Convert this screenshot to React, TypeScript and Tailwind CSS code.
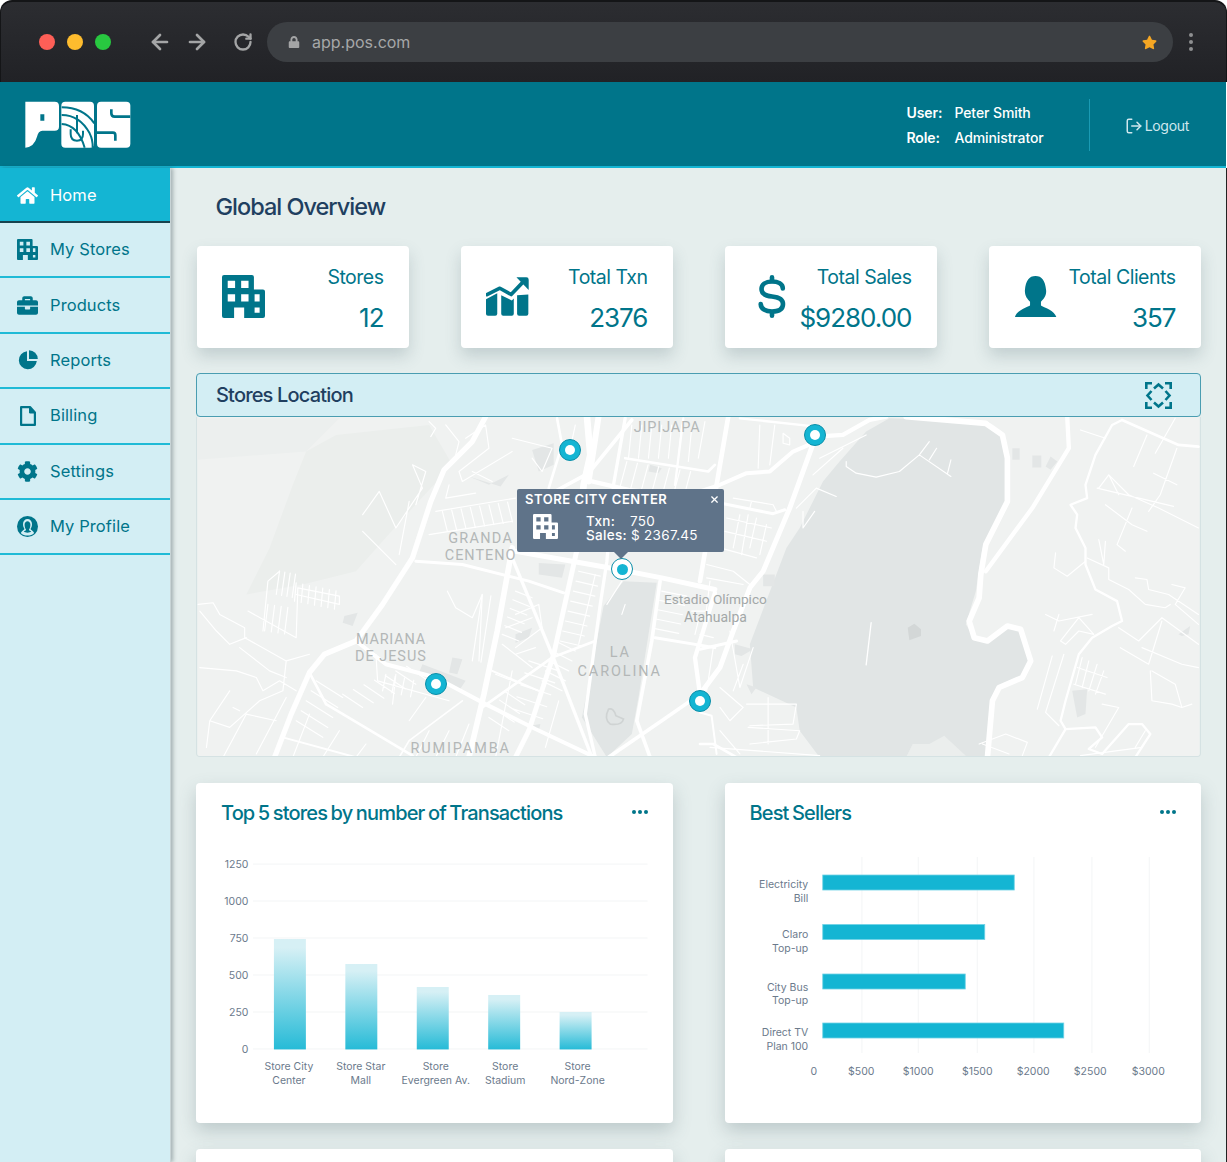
import React from "react";
import { ArrowLeft, ArrowRight, RotateCw, LogOut } from "lucide-react";
import { FaHome, FaBriefcase, FaCog, FaLock, FaStar } from "react-icons/fa";

const TEAL = "#00758a";

function Building({ className }: { className?: string }) {
  return (
    <svg viewBox="0 0 128 128" className={className} fill="currentColor">
      <path
        fillRule="evenodd"
        d="M6 0H89Q95 0 95 6V43H122Q128 43 128 49V122Q128 128 122 128H66V97H36V128H6Q0 128 0 122V6Q0 0 6 0ZM17 17V39H39V17ZM57 17V39H79V17ZM17 57V79H39V57ZM57 57V79H79V57ZM97 57V79H112V57ZM97 97V112H112V97Z"
      />
    </svg>
  );
}

function Growth({ className }: { className?: string }) {
  return (
    <svg viewBox="0 0 130 120" className={className} fill="currentColor">
      <path d="M0 68 L34 50 V112 Q34 118 28 118 H6 Q0 118 0 112Z" />
      <path d="M46 56 L78 72 L84 66 V112 Q84 118 78 118 H52 Q46 118 46 112Z" />
      <path d="M94 56 L128 54 V112 Q128 118 122 118 H100 Q94 118 94 112Z" />
      <path d="M3 54 L42 35 L76 54 L116 12" fill="none" stroke="currentColor" strokeWidth="11" strokeLinecap="round" strokeLinejoin="round" />
      <path d="M92 2 H122 Q129 2 129 9 V40 Z" />
    </svg>
  );
}

function Dollar() {
  return (
    <svg viewBox="0 0 28 43" className="w-[28px] h-[43px]" fill="none" stroke={TEAL} strokeWidth="4.6" strokeLinecap="round">
      <path d="M14 2.3V6M14 37V40.7" />
      <path d="M24.8 13.5C24.8 9 20 6.5 14 6.5C7.5 6.5 3.5 9.5 3.5 14C3.5 19 7.5 20.8 14 21.5C21 22.2 25 24.5 25 29C25 33.8 21 36.5 14 36.5C7.5 36.5 3 34 2.7 29" />
    </svg>
  );
}

function Bust({ className }: { className?: string }) {
  return (
    <svg viewBox="908 104 134 132" className={className} fill="currentColor">
      <path d="M911 234C915 215 945 205 958 198L958 186C950 178 941 168 942 150C945 120 955 106 975 106C995 106 1005 120 1008 150C1010 168 1000 178 992 186L992 198C1005 205 1035 215 1040 234Z" />
    </svg>
  );
}

function Frame() {
  return (
    <svg viewBox="0 0 27 27" className="w-[27px] h-[27px]" fill="none" stroke={TEAL} strokeWidth="2.6">
      <path d="M1.3 7V1.3H7M20 1.3H25.7V7M25.7 20V25.7H20M7 25.7H1.3V20" />
      <path d="M9 6.5L13.5 2.5L18 6.5M20.5 9L24.5 13.5L20.5 18M18 20.5L13.5 24.5L9 20.5M6.5 18L2.5 13.5L6.5 9" />
    </svg>
  );
}

function Logo() {
  return (
    <svg viewBox="70 300 330 150" className="w-[110px] h-[50px]">
      <path
        fill="#fff"
        fillRule="evenodd"
        d="M77 305H165Q178 305 178 318V380Q178 392 165 392H128Q116 392 112 410Q104 440 77 443ZM122 343V362H134V343Z"
      />
      <rect x="185" y="305" width="98" height="138" rx="12" fill="#fff" />
      <g fill="none" stroke={TEAL} strokeWidth="6">
        <path d="M186 322Q250 322 284 370" />
        <path d="M186 345Q240 345 270 400Q280 420 279 443" />
        <path d="M186 372Q235 375 255 443" />
      </g>
      <path d="M232 345V400M213 388V402Q213 422 232 422Q250 422 250 402V392" fill="none" stroke={TEAL} strokeWidth="6" />
      <rect x="292" y="305" width="100" height="138" rx="12" fill="#fff" />
      <path d="M392 350H345Q335 350 335 340V328" fill="none" stroke={TEAL} strokeWidth="8" />
      <path d="M292 398H340Q347 398 347 406V422" fill="none" stroke={TEAL} strokeWidth="8" />
    </svg>
  );
}

function PieIcon() {
  return (
    <svg viewBox="0 0 20 20" className="w-[20px] h-[20px]" fill={TEAL}>
      <path d="M9 1.2A9 9 0 1 0 18.8 11H9Z" />
      <path d="M11 0.2A9 9 0 0 1 19.8 9H11Z" />
    </svg>
  );
}

function FileIcon() {
  return (
    <svg viewBox="0 0 16 20" className="w-[16px] h-[20px]" fill="none" stroke={TEAL} strokeWidth="2.2" strokeLinejoin="round">
      <path d="M1.1 1.1H10L14.9 6.5V18.9H1.1Z" />
      <path d="M9.5 1.1V7H14.9" fill={TEAL} strokeWidth="1" />
    </svg>
  );
}

function ProfileIcon() {
  return (
    <svg viewBox="0 0 21 21" className="w-[21px] h-[21px]">
      <circle cx="10.5" cy="10.5" r="10.5" fill={TEAL} />
      <path d="M3.8 17C5 14.5 7 14 7.5 13C6.5 11.5 6 10 6 8C6 5 8 3 10.5 3C13 3 15 5 15 8C15 10 14.5 11.5 13.5 13C14 14 16 14.5 17.2 17C15.5 19 13 19.5 10.5 19.5C8 19.5 5.5 19 3.8 17Z" fill="#d3eef4" />
      <path d="M6.8 15.5C8 15 9 14.5 9 13.5C8 12.5 7.6 10 7.6 8.5C7.6 6.5 9 5.2 10.5 5.2C12 5.2 13.4 6.5 13.4 8.5C13.4 10 13 12.5 12 13.5C12 14.5 13 15 14.2 15.5C13 17 8 17 6.8 15.5Z" fill={TEAL} />
    </svg>
  );
}

const NAV: { label: string; icon: React.ReactNode; active?: boolean }[] = [
  { label: "Home", icon: <FaHome size={21} color="#fff" />, active: true },
  { label: "My Stores", icon: <Building className="w-[21px] h-[21px] text-[#00758a]" /> },
  { label: "Products", icon: <FaBriefcase size={21} color={TEAL} /> },
  { label: "Reports", icon: <PieIcon /> },
  { label: "Billing", icon: <FileIcon /> },
  { label: "Settings", icon: <FaCog size={21} color={TEAL} /> },
  { label: "My Profile", icon: <ProfileIcon /> },
];

function Chrome() {
  return (
    <div className="h-[82px] bg-white shrink-0">
      <div className="h-full rounded-t-[12px] border-t-2 border-x border-[#141517] bg-gradient-to-b from-[#2c2d31] to-[#212226] flex items-center pl-[38px] pr-[31px]">
        <div className="flex gap-[12px]">
          <span className="w-[16px] h-[16px] rounded-full bg-[#fe5f57]" />
          <span className="w-[16px] h-[16px] rounded-full bg-[#febc2e]" />
          <span className="w-[16px] h-[16px] rounded-full bg-[#28c840]" />
        </div>
        <div className="flex items-center ml-[37px] text-[#a4a5a6]">
          <ArrowLeft size={24} strokeWidth={2.7} />
          <ArrowRight size={24} strokeWidth={2.7} className="ml-[13px]" />
          <RotateCw size={20} strokeWidth={2.8} className="ml-[24px]" />
        </div>
        <div className="ml-[14px] h-[40px] w-[906px] rounded-[20px] bg-[#3c3f43] flex items-center pl-[21px] pr-[16px]">
          <FaLock size={12} color="#a4a5a6" />
          <span className="ml-[12px] mb-[1px] text-[16px] text-[#a6a7a8]">app.pos.com</span>
          <FaStar size={15} color="#f5a623" className="ml-auto" />
        </div>
        <div className="ml-[16px] flex flex-col gap-[3px]">
          <span className="w-[4px] h-[4px] rounded-full bg-[#8e8f91]" />
          <span className="w-[4px] h-[4px] rounded-full bg-[#8e8f91]" />
          <span className="w-[4px] h-[4px] rounded-full bg-[#8e8f91]" />
        </div>
      </div>
    </div>
  );
}

function Header() {
  return (
    <header className="h-[86px] shrink-0 bg-[#00758a] border-b-2 border-[#14b5d3] flex items-center pl-[23px] pr-[37px] pt-[2px] mr-px">
      <Logo />
      <div className="ml-auto grid grid-cols-[48px_auto] gap-y-[7px] text-[14px] leading-[18px] text-white tracking-[-0.1px] font-medium">
        <span className="font-semibold">User:</span>
        <span>Peter Smith</span>
        <span className="font-semibold">Role:</span>
        <span>Administrator</span>
      </div>
      <div className="w-px h-[52px] bg-[#1a9bb4] ml-[45px]" />
      <div className="ml-[35px] mt-[1px] flex items-center gap-[2px] text-[14px] text-[#cfe8ee] tracking-[-0.3px]">
        <LogOut size={18} strokeWidth={2} />
        <span>Logout</span>
      </div>
    </header>
  );
}

function Sidebar() {
  return (
    <aside className="w-[171px] shrink-0 bg-[#d3eef4] shadow-[2px_0_4px_rgba(40,60,70,0.35)] relative z-10 border-r border-[#c8d4d6]">
      {NAV.map((n) => (
        <div
          key={n.label}
          className={
            n.active
              ? "h-[55px] flex items-center pl-[16px] pt-[1px] bg-[#14b5d3] text-white border-b-2 border-[#17434f]"
              : "h-[55.4px] flex items-center pl-[16px] text-[#00758a] border-b-2 border-[#1fbad6]"
          }
        >
          <span className="w-[23px] flex justify-center">{n.icon}</span>
          <span className="ml-[11px] text-[16.5px] tracking-[0.1px]">{n.label}</span>
        </div>
      ))}
    </aside>
  );
}

function Stat({ label, value, icon }: { label: string; value: string; icon: React.ReactNode }) {
  return (
    <div className="h-[102px] rounded-[4px] bg-white shadow-[0_8px_16px_rgba(70,95,105,0.22)] flex pl-[25px] pr-[25.5px] pt-[19px] text-[#00758a]">
      <div className="w-[43px] h-[43px] mt-[10px] flex items-center justify-center shrink-0">{icon}</div>
      <div className="ml-auto flex flex-col items-end">
        <span className="text-[19.5px] leading-[24px] tracking-[-0.5px]">{label}</span>
        <span className="mt-[14px] text-[26px] leading-[30px] tracking-[-1px]">{value}</span>
      </div>
    </div>
  );
}

type L = [number, number, number, number, number, number, number];
const ladders: L[] = [
  [740, 290, 755, 350, 28, -4, 8],
  [1295, 140, 1275, 215, 32, 5, 7],
  [1150, 470, 1215, 485, -8, 30, 8],
  [250, 470, 240, 540, 16, 3, 4],
  [300, 505, 295, 560, 20, 4, 7],
  [215, 570, 205, 650, 20, 3, 4],
  [860, 540, 830, 740, 26, 4, 2],
  [570, 780, 560, 830, 28, 6, 4],
  [440, 840, 500, 880, 32, -14, 7],
  [880, 910, 940, 950, 16, -26, 4],
  [1040, 800, 1100, 830, 10, -30, 5],
  [1430, 30, 1420, 130, 30, 5, 3],
  [1140, 30, 1125, 100, 0, 0, 1],
  [960, 530, 1010, 550, -8, 26, 6],
  [1400, 530, 1475, 545, -6, 28, 5],
  [1490, 330, 1530, 340, 0, 0, 1],
  [1090, 770, 1000, 740, -12, 36, 5],
  [360, 800, 440, 850, -15, 30, 5],
  [1310, 30, 1300, 130, 30, 0, 6],
];

function ladderPath(l: L) {
  let d = "";
  for (let i = 0; i < l[6]; i++) {
    d += `M${l[0] + l[4] * i} ${l[1] + l[5] * i}L${l[2] + l[4] * i} ${l[3] + l[5] * i}`;
  }
  return d;
}

const WEST: [string, number][] = [
  ["M870 5L830 80L745 165L705 260L650 430L560 570L480 680L385 720L340 775L285 900L235 1030", 16],
  ["M950 400L905 650L865 840L820 1030", 17],
  ["M1145 405L1075 720L1000 950L960 1030", 15],
  ["M1175 5L1185 120L1165 210L1145 405", 20],
  ["M1210 5L1180 200", 18],
  ["M1290 10L1255 210L1235 440L1215 570L1170 900L1200 1030", 10],
  ["M1310 15L1180 175L1060 240", 11],
  ["M1085 10L1100 90L1060 220", 8],
  ["M660 440L800 450L1000 500L1105 535", 9],
  ["M960 410L1130 440L1270 465L1400 490L1560 525", 15],
  ["M1190 200L1300 225L1560 255", 13],
  ["M950 430L1070 720L1190 1030", 10],
  ["M1395 500L1370 680L1325 920L1365 1030", 11],
  ["M480 680L570 750L720 790L870 870L1020 945L1200 1030", 12],
  ["M390 870L650 1025", 8],
  ["M340 775L390 870", 8],
  ["M860 880L1070 730L1200 680", 8],
  ["M890 770L1030 830", 6],
  ["M1380 670L1560 700", 9],
  ["M1515 840L1400 920L1240 1030", 11],
  ["M1560 535L1500 730L1515 840", 13],
  ["M1290 130L1540 170L1560 150", 8],
  ["M1465 10L1440 210", 7],
  ["M800 860L640 980L610 1030", 5],
  ["M260 970L480 1030", 6],
];

const WEST_THIN =
  "M5 570L50 565L70 600L145 640L145 670L270 740L340 720M10 590L60 650L100 690L150 670M30 1000L40 920L100 830M40 920L100 940L190 860L260 830L270 740M180 790L200 830L250 800L300 830M500 300L550 230L600 340L680 220L650 150L690 170L660 270M500 350L600 450M810 70L870 30L880 100L790 170L800 200L950 110M950 70L1070 100L1040 170L1010 130M760 210L750 250L840 235M755 530L780 580L830 610L860 540L850 740M720 290L960 250M700 360L950 320M610 420L640 260M155 590L300 670L305 520L430 545L430 570L300 540M200 650L215 500L250 470M700 20L720 40L705 65M750 30L790 80L780 120M930 640L1010 610M920 690L1010 760M900 780L1030 830M110 880L130 890M180 1020L270 850M1235 570L1280 500M1290 570L1280 600M830 170L890 200M540 720L545 800L760 860M600 780L590 870M690 850L640 920M1200 480L1150 690M1020 700L960 720M1490 590L1540 590M1500 660L1510 620M1510 130L1530 20M80 1030L150 900L240 920M130 700L220 770L270 790M10 760L120 770L180 790M340 900L290 1030M430 950L380 1030M510 990L480 1030M700 950L660 1030M760 950L720 1030M820 930L780 1030M950 770L900 1030M1050 1000L1090 860M960 600L1030 570L1040 640L960 700";

const EAST: [string, number][] = [
  ["M620 5L860 25L910 60L925 130L925 260L860 390L845 480L840 550L810 620L825 670L865 680L925 635L965 645L995 740L970 790L900 820L880 860L865 1030", 17],
  ["M1105 5L1110 100L1000 280L860 470", 13],
  ["M350 60L270 280L190 470L150 520L100 650L60 760L0 840", 15],
  ["M350 65L430 60L510 15L560 5", 13],
  ["M350 80L280 110L210 170L140 175L60 210L0 230", 12],
  ["M85 5L50 210L0 500", 14],
  ["M60 265L220 297L255 285", 9],
  ["M0 705L110 680", 9],
  ["M120 10L350 35", 7],
  ["M1270 15L1440 90L1500 95", 8],
  ["M1270 15L1240 30L1190 120L1160 210L1165 250L1115 270L1135 300L1130 340L1160 400L1160 450L1190 525L1255 560L1270 620L1240 635L1180 670L1140 720L1100 860L1085 920L1100 945L1050 1030", 7],
  ["M1100 945L1190 940L1210 970L1170 1005L1210 1020L1290 930L1330 930L1355 960L1310 1030", 7],
  ["M0 895L35 905L50 1020", 6],
  ["M0 990L40 990L110 1030", 8],
];

const EAST_THIN =
  "M660 120L755 185M690 80L660 120M712 100L690 135M755 135L745 175M440 140L440 155L470 175L530 187L600 170L660 120M1145 45L1220 70M1345 60L1305 155M1430 10L1370 115M1435 100L1385 240L1350 290M1200 220L1230 180L1290 240L1380 280L1500 340M1230 180L1260 240M1300 280L1255 390L1280 410M1220 270L1300 330L1345 350M1195 220L1425 275M1365 175L1435 210M1070 415L1065 460L1105 485L1160 440M1220 380L1215 450L1200 375M1165 430L1230 460L1230 495L1290 525L1340 570L1400 580L1415 570M1310 490L1345 495L1350 525L1410 540L1500 600M1420 510L1460 520L1430 570L1500 630M1040 600L1080 620L1180 600M1080 600L1065 650M1140 610L1085 680L1100 690L1140 650L1185 660L1140 610M1260 640L1320 680L1390 610L1500 690M1265 700L1350 750L1390 620M1330 700L1450 750L1500 760M1360 770L1430 810L1450 880L1480 870M1355 770L1360 860L1420 870L1450 880M1060 725L1015 885M1095 720L1040 895L1080 935M1150 730L1130 810M1170 740L1150 820M1195 750L1170 830M1215 770L1190 840M1135 760L1225 790M1125 810L1220 840M60 820L130 880L90 920L60 880M140 870L290 870L280 930L150 935M145 940L300 950L290 975L150 990M205 850L205 990M30 1000L360 1025M90 650L120 820L160 700M290 280L350 220L410 245M310 290L310 340L345 290M360 130L440 90L500 60M340 180L430 100M100 250L220 270L230 290M155 260L150 280M120 300L100 400M145 300L125 420M170 310L150 400M200 330L180 420M80 310L215 340M75 350L200 380M60 400L170 430M20 450L100 470L150 510M20 490L130 510M0 660L40 670M180 30L175 160M225 30L210 150M250 55L250 85L270 90L270 70ZM1190 1000L1260 880L1210 870M1145 1025L1330 1000M840 990L920 960L985 985L970 1025M930 1020L850 990M1310 1000L1340 950M30 500L10 660M40 700L20 830M130 750L100 830M60 950L120 1020";

const MAP_LABELS: [string, number, number, number][] = [
  ["JIPIJAPA", 667, 432, 0.9],
  ["GRANDA", 480, 543, 1.3],
  ["CENTENO", 480, 560.5, 1],
  ["MARIANA", 390, 644.5, 0.8],
  ["DE JESUS", 390, 661.5, 1],
  ["LA", 620, 658, 1.9],
  ["CAROLINA", 619.5, 677, 1.9],
  ["RUMIPAMBA", 460, 754, 1.9],
];

function MapArt() {
  return (
    <svg viewBox="196 417 1005 340" className="block w-full h-full">
      <rect x="196" y="417" width="1005" height="340" fill="#f0f2f1" />
      <g transform="translate(195 415) scale(0.3333)">
        <path d="M0 10H430L330 110L0 135Z" fill="#ecefee" />
        <path d="M330 110L420 60L700 30L770 150L650 280L560 380L480 470L320 510L150 540L220 400L290 210Z" fill="#ebeeec" />
        <path d="M1225 575L1285 500L1385 505L1330 850L1310 960L1235 1030L1160 910Z" fill="#e1e5e5" />
        <path d="M1010 105L1075 85L1075 150L1030 170ZM820 185L880 210L940 180L915 215ZM1030 445L1110 450L1100 490L1030 480ZM960 660L1010 640L1000 670L960 685ZM770 730L800 735L785 780L760 775ZM680 750L810 800L790 830L670 775ZM1365 150L1400 160L1390 175L1360 170ZM1005 935L1035 930L1030 950ZM445 605L485 595L470 635L440 625Z" fill="#e3e6e6" />
        <path d="M1240 885Q1255 880 1262 905L1285 915Q1280 935 1245 930Q1225 915 1240 885Z" fill="#e1e5e5" stroke="#cfd3d3" strokeWidth="5" />
        <g fill="none" stroke="#fff" strokeLinecap="round" strokeLinejoin="round">
          <path d={WEST_THIN} strokeWidth="3.5" />
          <path d={ladders.map(ladderPath).join("")} strokeWidth="3.5" />
          {WEST.map(([d, w], i) => (
            <path key={i} d={d} strokeWidth={w} />
          ))}
        </g>
      </g>
      <g transform="translate(700 415) scale(0.3333)">
        <path d="M500 50L570 10L870 20L920 70L930 260L850 400L830 530L800 630L830 680L870 680L930 630L970 640L1000 740L970 790L890 830L870 950L860 1030L360 1030L300 950L290 880L160 820L150 690L260 400L300 340L370 200L420 140Z" fill="#e1e5e5" />
        <path d="M625 640L645 628L665 645L665 665L630 678Z" fill="#d3d7d7" />
        <path d="M620 1030L640 990L690 990L735 965L800 1025Z" fill="#ebeeed" />
        <path d="M940 100H962V135H940ZM1000 122H1027V158H1000ZM1055 125L1075 140L1055 165L1040 155ZM1120 830L1165 825L1160 900L1135 910ZM1440 660L1475 635L1470 660L1450 665ZM190 480H225V515H190ZM105 690L160 705L125 725L105 720ZM140 810L170 820L155 840Z" fill="#e3e6e6" />
        <g fill="none" stroke="#fff" strokeLinecap="round" strokeLinejoin="round">
          <path d={EAST_THIN} strokeWidth="3.5" />
          <path d="M515 625L500 752" strokeWidth="4" />
          {EAST.map(([d, w], i) => (
            <path key={i} d={d} strokeWidth={w} />
          ))}
        </g>
      </g>
      <g fill="#b3b7b7" fontFamily="Roboto, sans-serif" fontSize="14.5" textAnchor="middle">
        {MAP_LABELS.map(([t, x, y, s]) => (
          <text key={t} x={x} y={y} letterSpacing={s}>
            {t}
          </text>
        ))}
        <text x="715.5" y="604.5" fontSize="13.7" fill="#a3a8a8">Estadio Olímpico</text>
        <text x="715.5" y="622.5" fontSize="14" fill="#a3a8a8">Atahualpa</text>
      </g>
    </svg>
  );
}

function Pin({ className }: { className: string }) {
  return (
    <span className={`absolute w-[22px] h-[22px] rounded-full bg-[#14b5d3] border border-[#0b8ea8] flex items-center justify-center ${className}`}>
      <span className="w-[10px] h-[10px] rounded-full bg-white" />
    </span>
  );
}

function MapPanel() {
  return (
    <div className="h-[340px] relative overflow-hidden rounded-b-[4px] border-x border-b border-[#d5e2e3]">
      <MapArt />
      <Pin className="left-[362px] top-[22px]" />
      <Pin className="left-[607px] top-[7px]" />
      <Pin className="left-[228px] top-[256px]" />
      <Pin className="left-[492px] top-[273px]" />
      <span className="absolute left-[414px] top-[141px] w-[22px] h-[22px] rounded-full bg-white border border-[#0b8ea8] flex items-center justify-center">
        <span className="w-[11px] h-[11px] rounded-full bg-[#14b5d3]" />
      </span>
      <div className="absolute left-[320px] top-[72px] w-[207px] h-[63px] rounded-[2px] bg-[#566b83]/95 text-white pl-[8px] pr-[6px] pt-[2px]">
        <div className="flex items-center justify-between text-[13px] leading-[16px] font-semibold tracking-[0.55px]">
          <span>STORE CITY CENTER</span>
          <svg viewBox="0 0 8 8" className="w-[7px] h-[7px]" stroke="#fff" strokeWidth="1.5"><path d="M0.5 0.5L7.5 7.5M7.5 0.5L0.5 7.5" /></svg>
        </div>
        <div className="flex mt-[7px] pl-[8px]">
          <Building className="w-[25px] h-[25px] text-white shrink-0" />
          <div className="ml-[28px] text-[13.5px] leading-[14px] tracking-[0.3px]">
            <div className="flex"><span className="w-[44px] font-medium">Txn:</span><span>750</span></div>
            <div className="flex"><span className="w-[45px] font-medium">Sales:</span><span>$ 2367.45</span></div>
          </div>
        </div>
        <span className="absolute left-[97px] top-[63px] w-0 h-0 border-x-[7px] border-x-transparent border-t-[7px] border-t-[#566b83]/95" />
      </div>
    </div>
  );
}

const DOTS = (
  <span className="flex gap-[2px] mr-[1px] mb-[3px]">
    <span className="w-[4px] h-[4px] rounded-full bg-[#00758a]" />
    <span className="w-[4px] h-[4px] rounded-full bg-[#00758a]" />
    <span className="w-[4px] h-[4px] rounded-full bg-[#00758a]" />
  </span>
);

function Card({ title, children }: { title: string; children?: React.ReactNode }) {
  return (
    <div className="h-[340px] rounded-[4px] bg-white shadow-[0_8px_18px_rgba(70,95,105,0.25)]">
      <div className="flex items-center justify-between pl-[25px] pr-[24px] pt-[16px] h-[44px]">
        <span className="text-[20px] leading-[24px] font-[450] tracking-[-0.85px] [word-spacing:-1px] text-[#00758a]">{title}</span>
        {DOTS}
      </div>
      {children}
    </div>
  );
}

const AX = { fill: "#6b7a8c", fontSize: 10.5, fontFamily: "Inter, sans-serif" };

function TxnChart() {
  const ys = [["1250", 864], ["1000", 901], ["750", 938], ["500", 975], ["250", 1012], ["0", 1049]] as const;
  const bars = [
    [274, 939], [345.5, 964], [417, 987], [488.5, 995], [560, 1012],
  ];
  const cats = [
    ["Store City", "Center", 289], ["Store Star", "Mall", 361], ["Store", "Evergreen Av.", 436], ["Store", "Stadium", 505.5], ["Store", "Nord-Zone", 578],
  ] as const;
  return (
    <svg viewBox="196 827 477 296" className="block w-full h-[296px]">
      <defs>
        <linearGradient id="barg" x1="0" y1="0" x2="0" y2="1">
          <stop offset="0.08" stopColor="#d6f0f5" />
          <stop offset="1" stopColor="#26bbd7" />
        </linearGradient>
      </defs>
      {ys.map(([t, y]) => (
        <g key={t}>
          <line x1="253" x2="648" y1={y} y2={y} stroke="#f3f5f6" />
          <text x="248.5" y={y + 4} textAnchor="end" {...AX}>{t}</text>
        </g>
      ))}
      {bars.map(([x, y]) => (
        <rect key={x} x={x} y={y} width="32" height={1049.5 - y} fill="url(#barg)" />
      ))}
      {cats.map(([a, b, x]) => (
        <g key={x} textAnchor="middle">
          <text x={x} y={1070} {...AX}>{a}</text>
          <text x={x} y={1084} {...AX}>{b}</text>
        </g>
      ))}
    </svg>
  );
}

function SellersChart() {
  const xs = [861.7, 918, 977, 1033.7, 1091.7, 1149];
  const bars = [[875, 1014], [924.5, 984.5], [974, 965], [1023, 1063.5]];
  const labels = [
    ["Electricity", 888], ["Bill", 902], ["Claro", 938], ["Top-up", 952], ["City Bus", 991], ["Top-up", 1004], ["Direct TV", 1036], ["Plan 100", 1050],
  ] as const;
  const ticks = [["0", 813.5], ["$500", 861], ["$1000", 918], ["$1500", 977], ["$2000", 1033], ["$2500", 1090], ["$3000", 1148]] as const;
  return (
    <svg viewBox="725 827 476 296" className="block w-full h-[296px]">
      {xs.map((x) => (
        <line key={x} x1={x} x2={x} y1="857" y2="1053" stroke="#f3f5f6" />
      ))}
      {bars.map(([y, x2]) => (
        <rect key={y} x="822.5" y={y} width={x2 - 822.5} height="15" fill="#14b5d3" stroke="#6fd3e6" strokeWidth="0.8" />
      ))}
      {labels.map(([t, y], i) => (
        <text key={i} x="808" y={y} textAnchor="end" {...AX}>{t}</text>
      ))}
      {ticks.map(([t, x]) => (
        <text key={t} x={x} y="1075" textAnchor="middle" {...AX}>{t}</text>
      ))}
    </svg>
  );
}

export default function App() {
  return (
    <div className="w-[1227px] h-[1162px] overflow-hidden flex flex-col bg-white font-['Inter',sans-serif]">
      <Chrome />
      <Header />
      <div className="flex flex-1 min-h-0 border-r border-[#222]">
        <Sidebar />
        <main className="flex-1 min-w-0 bg-[#e5eeed] px-[25px] overflow-hidden">
          <h1 className="pt-[26px] pl-[19.5px] text-[23.5px] leading-[26px] tracking-[-1px] font-[450] text-[#1f3f60]">
            Global Overview
          </h1>
          <section className="mt-[26px] grid grid-cols-4 gap-[52px] pl-px">
            <Stat label="Stores" value="12" icon={<Building className="w-[43px] h-[43px]" />} />
            <Stat label="Total Txn" value="2376" icon={<Growth className="w-[44px] h-[41px]" />} />
            <Stat label="Total Sales" value="$9280.00" icon={<Dollar />} />
            <Stat label="Total Clients" value="357" icon={<Bust className="w-[44px] h-[43px]" />} />
          </section>
          <section className="mt-[25px]">
            <div className="h-[44px] rounded-[4px] border border-[#4a9db1] bg-[#d3eef4] flex items-center justify-between pl-[19px] pr-[28px]">
              <span className="text-[20px] font-[450] tracking-[-0.82px] text-[#1f3f60]">Stores Location</span>
              <Frame />
            </div>
            <MapPanel />
          </section>
          <section className="mt-[26px] grid grid-cols-2 gap-[52px]">
            <Card title="Top 5 stores by number of Transactions"><TxnChart /></Card>
            <Card title="Best Sellers"><SellersChart /></Card>
          </section>
          <section className="mt-[26px] grid grid-cols-2 gap-[52px]">
            <Card title="" />
            <Card title="" />
          </section>
        </main>
      </div>
    </div>
  );
}
